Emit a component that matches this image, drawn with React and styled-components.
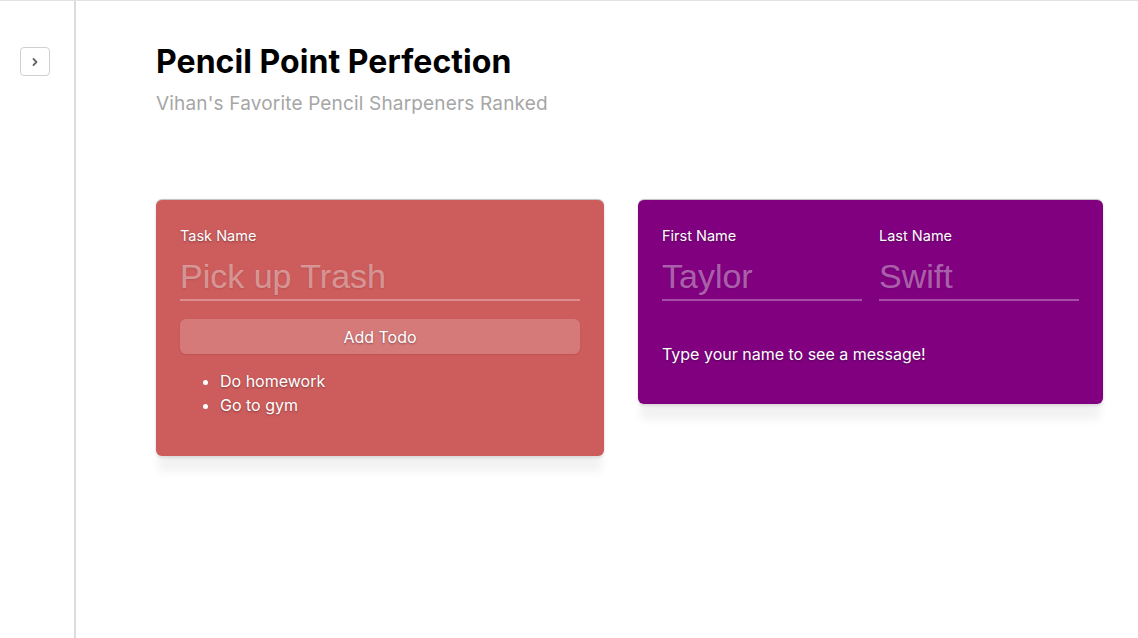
import React from "react";
import styled, { createGlobalStyle } from "styled-components";

const GlobalStyle = createGlobalStyle`
  html, body {
    margin: 0;
    padding: 0;
    background: #fff;
    font-family: "Inter", "Noto Sans", sans-serif;
  }
  * {
    box-sizing: border-box;
  }
`;

const Page = styled.div`
  display: flex;
  width: 1138px;
  height: 638px;
  border-top: 1px solid #e2e2e2;
`;

const Sidebar = styled.aside`
  width: 76px;
  flex-shrink: 0;
  border-right: 2px solid #dcdcdc;
  padding: 46px 0 0 20px;
`;

const ToggleButton = styled.button`
  width: 30px;
  height: 29px;
  border: 1px solid #d0d0d0;
  border-radius: 4px;
  background: #fff;
  display: flex;
  align-items: center;
  justify-content: center;
  padding: 0;
  color: #666;
`;

const Main = styled.main`
  flex: 1;
  padding: 40px 0 0 80px;
`;

const Title = styled.h1`
  margin: 0;
  font-size: 32px;
  font-weight: 700;
  letter-spacing: 0.05px;
  color: #000;
  line-height: 42px;
`;

const Subtitle = styled.p`
  margin: 8px 0 0;
  font-size: 19px;
  letter-spacing: 0.17px;
  color: #a6a6a6;
  line-height: 26px;
`;

const CardRow = styled.div`
  display: flex;
  align-items: flex-start;
  gap: 34px;
  margin-top: 83px;
`;

const Card = styled.section`
  width: ${(p) => p.$width}px;
  min-height: ${(p) => p.$height}px;
  background: ${(p) => p.$bg};
  border-radius: 6px;
  padding: 27px 24px 24px;
  color: #fff;
  box-shadow: 0 -1px 1px rgba(0, 0, 0, 0.25), 0 18px 8px -2px rgba(0, 0, 0, 0.05),
    0 2px 3px rgba(0, 0, 0, 0.1);
  text-shadow: 0 1px 2px rgba(0, 0, 0, 0.35);
`;

const FieldRow = styled.div`
  display: flex;
  gap: 17px;
`;

const Field = styled.label`
  display: flex;
  flex-direction: column;
  width: ${(p) => p.$width}px;
`;

const Label = styled.span`
  font-size: 14.5px;
  line-height: 18px;
`;

const Input = styled.input`
  margin-top: 9px;
  width: 100%;
  height: 47px;
  padding: 0;
  border: none;
  border-bottom: 2px solid rgba(255, 255, 255, 0.3);
  background: transparent;
  font-family: "Liberation Sans", Arial, sans-serif;
  font-size: 34px;
  color: #fff;
  outline: none;
  text-shadow: 0 1px 2px rgba(0, 0, 0, 0.1);

  &::placeholder {
    color: rgba(255, 255, 255, 0.4);
  }
`;

const AddButton = styled.button`
  margin-top: 18px;
  width: 400px;
  height: 35px;
  border: none;
  border-radius: 6px;
  background: rgba(255, 255, 255, 0.18);
  color: #fff;
  font-family: "Inter", sans-serif;
  font-size: 16px;
  text-shadow: 0 1px 2px rgba(0, 0, 0, 0.35);
  box-shadow: 0 1px 2px rgba(0, 0, 0, 0.08);
`;

const TodoList = styled.ul`
  margin: 15px 0 0;
  padding-left: 40px;
  font-size: 16px;
  line-height: 24px;
`;

const Message = styled.p`
  margin: 41px 0 0;
  font-size: 16px;
  line-height: 24px;
`;

const Chevron = () => (
  <svg width="10" height="10" viewBox="0 0 10 10" fill="none">
    <path d="M3.5 2 L6.5 5 L3.5 8" stroke="#666" strokeWidth="1.8" strokeLinecap="round" strokeLinejoin="round" />
  </svg>
);

const todos = ["Do homework", "Go to gym"];

export default function App() {
  return (
    <>
      <GlobalStyle />
      <Page>
        <Sidebar>
          <ToggleButton aria-label="Open sidebar">
            <Chevron />
          </ToggleButton>
        </Sidebar>
        <Main>
          <Title>Pencil Point Perfection</Title>
          <Subtitle>Vihan's Favorite Pencil Sharpeners Ranked</Subtitle>
          <CardRow>
            <Card $width={448} $height={256} $bg="#cd5c5c">
              <Field $width={400}>
                <Label>Task Name</Label>
                <Input placeholder="Pick up Trash" />
              </Field>
              <AddButton>Add Todo</AddButton>
              <TodoList>
                {todos.map((t) => (
                  <li key={t}>{t}</li>
                ))}
              </TodoList>
            </Card>
            <Card $width={465} $height={204} $bg="#800080">
              <FieldRow>
                <Field $width={200}>
                  <Label>First Name</Label>
                  <Input placeholder="Taylor" />
                </Field>
                <Field $width={200}>
                  <Label>Last Name</Label>
                  <Input placeholder="Swift" />
                </Field>
              </FieldRow>
              <Message>Type your name to see a message!</Message>
            </Card>
          </CardRow>
        </Main>
      </Page>
    </>
  );
}
